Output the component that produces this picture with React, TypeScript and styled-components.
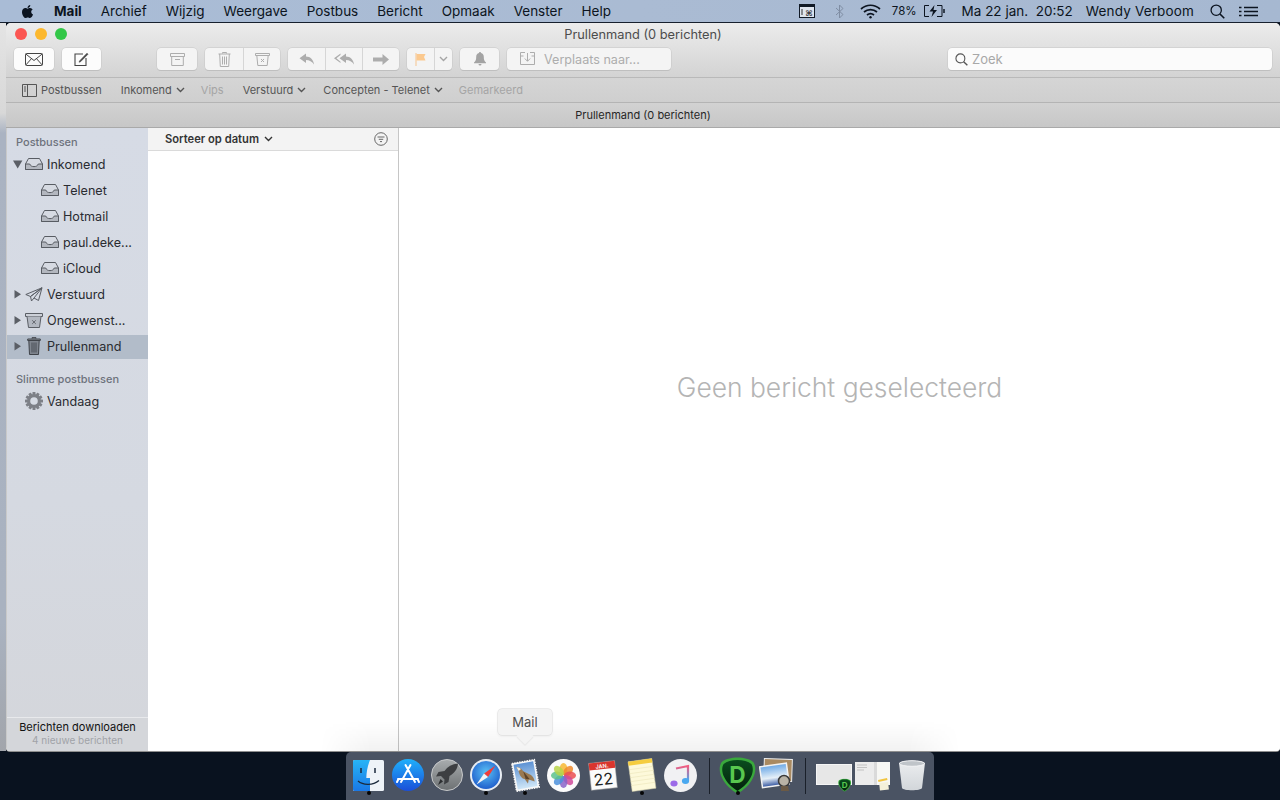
import React from "react";
import styled, { createGlobalStyle } from "styled-components";
import { FaApple } from "react-icons/fa";

const GlobalStyle = createGlobalStyle`
  html, body {
    margin: 0;
    padding: 0;
    background: #0a121e;
    font-family: Inter, "Liberation Sans", sans-serif;
  }
`;

const Desktop = styled.div`
  position: relative;
  width: 1280px;
  height: 800px;
  overflow: hidden;
  display: flex;
  flex-direction: column;
  background: #09121f;
`;

/* ---------- menu bar ---------- */

const MenuBar = styled.div`
  height: 22px;
  flex: none;
  display: flex;
  align-items: center;
  background: linear-gradient(90deg, #a9bcd6, #aabbd3 50%, #a6b8d1);
  border-bottom: 1px solid #17202e;
  font-size: 13.5px;
  color: #0c1420;
`;

const AppleLogo = styled.div`
  display: flex;
  margin-left: 20px;
  margin-right: 19px;
`;

const MenuList = styled.div`
  display: flex;
  gap: 19px;
`;

const MenuItem = styled.span<{ $bold?: boolean }>`
  font-weight: ${(p) => (p.$bold ? 700 : 400)};
`;

const StatusArea = styled.div`
  margin-left: auto;
  margin-right: 22px;
  display: flex;
  align-items: center;
`;

const StatusText = styled.span<{ $gap: number; $small?: boolean; $wide?: boolean }>`
  margin-left: ${(p) => p.$gap}px;
  font-size: ${(p) => (p.$small ? "11.5px" : "13.5px")};
  letter-spacing: ${(p) => (p.$wide ? "0.15px" : "0")};
  white-space: pre;
`;

const StatusIcon = styled.svg<{ $gap: number }>`
  margin-left: ${(p) => p.$gap}px;
  display: block;
`;

const StatusSearch = styled.div`
  margin-left: 16px;
  display: flex;
`;

/* ---------- window ---------- */

const Workspace = styled.div`
  height: 728px;
  flex: none;
  display: flex;
`;

const BehindWindow = styled.div`
  width: 6px;
  flex: none;
  background: linear-gradient(180deg, #e4e4e4 0, #d8d8d8 90px, #aab3c2 110px, #a9b2c0 600px, #a2a5ab 100%);
`;

const Window = styled.div`
  flex: 1;
  min-width: 0;
  display: flex;
  flex-direction: column;
  border-radius: 5px 5px 4px 4px;
  overflow: hidden;
  background: #fff;
  box-shadow: inset 1px 0 0 #c9c9c9, 0 1px 0 #8e8e8e;
`;

const Chrome = styled.div`
  flex: none;
  height: 55px;
  background: linear-gradient(180deg, #ececec, #d3d3d3);
  border-bottom: 1px solid #b9b9b9;
  box-sizing: border-box;
`;

const TitleRow = styled.div`
  height: 22px;
  display: grid;
  grid-template-columns: 1fr auto 1fr;
  align-items: center;
  padding: 0 9px;
`;

const Lights = styled.div`
  display: flex;
  gap: 8px;
`;

const Light = styled.span<{ $color: string }>`
  width: 12px;
  height: 12px;
  border-radius: 50%;
  background: ${(p) => p.$color};
`;

const Title = styled.div`
  font-size: 12.8px;
  color: #4c4c4c;
`;

const Toolbar = styled.div`
  height: 22px;
  margin-top: 3px;
  display: flex;
  align-items: stretch;
  gap: 8px;
  padding: 0 8px;
`;

const ToolButton = styled.div<{ $w: number; $far?: number; $dim?: boolean }>`
  width: ${(p) => p.$w}px;
  margin-left: ${(p) => p.$far ?? 0}px;
  box-sizing: border-box;
  display: flex;
  align-items: center;
  justify-content: center;
  border-radius: 4px;
  background: ${(p) => (p.$dim ? "#f4f4f4" : "#fcfcfc")};
  box-shadow: 0 0 0 0.5px #c6c6c6, 0 1px 0 #b9b9b9;
`;

const ButtonGroup = styled.div`
  display: flex;
  border-radius: 4px;
  overflow: hidden;
  background: #f4f4f4;
  box-shadow: 0 0 0 0.5px #c6c6c6, 0 1px 0 #b9b9b9;
`;

const GroupPart = styled.div<{ $w: number }>`
  width: ${(p) => p.$w}px;
  box-sizing: border-box;
  display: flex;
  align-items: center;
  justify-content: center;
  & + & {
    border-left: 1px solid #d6d6d6;
  }
`;

const MoveButton = styled(ToolButton)`
  justify-content: flex-start;
  padding-left: 13px;
  gap: 9px;
  font-size: 12.6px;
  color: #adadad;
`;

const SearchBox = styled.div`
  width: 324px;
  margin-left: auto;
  display: flex;
  align-items: center;
  gap: 4px;
  padding-left: 7px;
  box-sizing: border-box;
  background: #fbfbfb;
  border-radius: 4px;
  box-shadow: 0 0 0 0.5px #c6c6c6, 0 1px 0 #b9b9b9;
  font-size: 13px;
  color: #a8a8a8;
`;

const FavoritesBar = styled.div`
  flex: none;
  height: 25px;
  box-sizing: border-box;
  display: flex;
  align-items: center;
  padding-left: 16px;
  background: linear-gradient(180deg, #d5d5d5, #cfcfcf);
  border-bottom: 1px solid #b4b4b4;
  font-size: 11px;
  color: #555;
`;

const FavItem = styled.div<{ $gap: number; $off?: boolean }>`
  margin-left: ${(p) => p.$gap}px;
  display: flex;
  align-items: center;
  gap: 4px;
  color: ${(p) => (p.$off ? "#a5a5a5" : "#555")};
`;

const MessageBar = styled.div`
  flex: none;
  height: 25px;
  box-sizing: border-box;
  display: flex;
  align-items: center;
  justify-content: center;
  background: linear-gradient(180deg, #d2d2d2, #c7c7c7);
  border-bottom: 1px solid #a9a9a9;
  font-size: 11px;
  color: #262626;
`;

const Panes = styled.div`
  flex: 1;
  min-height: 0;
  display: flex;
`;

/* ---------- sidebar ---------- */

const Sidebar = styled.div`
  width: 141px;
  margin-left: 1px;
  flex: none;
  display: flex;
  flex-direction: column;
  padding-top: 6px;
  box-sizing: border-box;
  background: linear-gradient(180deg, #d6dbe5, #d5d9e1 60%, #d4d6db);
`;

const SideHeading = styled.div<{ $top?: number }>`
  height: 17px;
  line-height: 17px;
  margin-top: ${(p) => p.$top ?? 0}px;
  padding-left: 9px;
  font-size: 11px;
  font-weight: 500;
  color: #6d727c;
`;

const SideRow = styled.div<{ $nested?: boolean; $selected?: boolean }>`
  height: ${(p) => (p.$selected ? "24px" : "26px")};
  margin-top: ${(p) => (p.$selected ? "2px" : "0")};
  padding-bottom: ${(p) => (p.$selected ? "2px" : "0")};
  box-sizing: border-box;
  display: flex;
  align-items: center;
  padding-left: ${(p) => (p.$nested ? "34px" : "6px")};
  gap: 4px;
  font-size: 12.6px;
  color: #2a2c31;
  background: ${(p) => (p.$selected ? "#b2bcc9" : "transparent")};
`;

const Disclosure = styled.div`
  width: 12px;
  margin-right: -4px;
  display: flex;
`;

const SideIcon = styled.div`
  width: 18px;
  display: flex;
  justify-content: center;
  flex: none;
`;

const SideFooter = styled.div`
  margin-top: auto;
  height: 34px;
  box-sizing: border-box;
  padding-bottom: 3px;
  border-top: 1px solid #e8e9ec;
  display: flex;
  flex-direction: column;
  align-items: center;
  justify-content: center;
  background: #d4d6da;
  font-size: 11px;
  color: #111;
`;

const FooterNote = styled.div`
  font-size: 10px;
  color: #a1a3a8;
`;

/* ---------- message list and detail ---------- */

const MessageList = styled.div`
  width: 251px;
  flex: none;
  box-sizing: border-box;
  background: #fff;
  border-right: 1px solid #c6c6c6;
`;

const SortBar = styled.div`
  height: 23px;
  box-sizing: border-box;
  display: flex;
  align-items: center;
  padding: 0 10px 0 17px;
  background: #f3f3f3;
  border-bottom: 1px solid #dadada;
  font-size: 11.2px;
  font-weight: 600;
  color: #333;
  gap: 5px;
`;

const FilterButton = styled.svg`
  margin-left: auto;
  display: block;
`;

const Detail = styled.div`
  flex: 1;
  display: flex;
  align-items: center;
  justify-content: center;
  padding-bottom: 106px;
  background: #fff;
  font-size: 26.4px;
  font-weight: 300;
  color: #b4b4b4;
`;

/* ---------- dock ---------- */

const DockFade = styled.div`
  position: absolute;
  left: 320px;
  width: 640px;
  bottom: 49px;
  height: 30px;
  background: linear-gradient(180deg, rgba(0, 0, 0, 0), rgba(0, 0, 0, 0.05));
  -webkit-mask-image: linear-gradient(90deg, transparent, #000 8%, #000 92%, transparent);
`;

const Dock = styled.div`
  position: absolute;
  left: 346px;
  bottom: 0;
  width: 588px;
  height: 48px;
  box-sizing: border-box;
  padding: 0 3px;
  display: flex;
  background: #4a5363;
  border-radius: 5px 5px 0 0;
`;

const DockSlot = styled.div<{ $running?: boolean }>`
  position: relative;
  width: 39px;
  height: 46px;
  display: flex;
  align-items: center;
  justify-content: center;
  &::after {
    content: "";
    display: ${(p) => (p.$running ? "block" : "none")};
    position: absolute;
    left: 18px;
    bottom: 3px;
    width: 4px;
    height: 4px;
    border-radius: 50%;
    background: #050505;
  }
`;

const DockDivider = styled.div`
  width: 1px;
  height: 36px;
  margin: 6px 8.5px 0;
  background: #1a202a;
`;

const Tooltip = styled.div`
  position: absolute;
  left: 498px;
  top: 709px;
  width: 54px;
  height: 26px;
  display: flex;
  align-items: center;
  justify-content: center;
  border-radius: 4px;
  background: #f4f4f4;
  box-shadow: 0 0 0 0.5px #dcdcdc, 0 1px 3px rgba(0, 0, 0, 0.08);
  font-size: 13px;
  color: #4e4e4e;
  &::after {
    content: "";
    position: absolute;
    left: 20.5px;
    top: 20.5px;
    width: 12px;
    height: 12px;
    background: #f4f4f4;
    transform: rotate(45deg);
    box-shadow: 1px 1px 1px rgba(0, 0, 0, 0.06);
  }
`;

/* ---------- small icons ---------- */

const Chevron = ({ color = "#555", size = 9 }: { color?: string; size?: number }) => (
  <svg width={size} height={6} viewBox="0 0 9 6" fill="none">
    <path d="M1 1l3.5 3.5L8 1" stroke={color} strokeWidth="1.4" />
  </svg>
);

const Triangle = ({ open }: { open?: boolean }) => (
  <svg width="10" height="10" viewBox="0 0 10 10">
    <path d={open ? "M0 1.5h9.4L4.7 9.5z" : "M1.5 1v8.4l6.5-4.2z"} fill="#5b5f66" />
  </svg>
);

const InboxIcon = () => (
  <svg width="18" height="12" viewBox="0 0 18 12" fill="#b3b7bf" stroke="#585c63" strokeWidth="1">
    <path d="M3.5.5h11l3 5.5v5.5H.5V6z" fill="#d6dae2" />
    <path d="M.5 6h4.2c.8 2 2.4 2.6 4.3 2.6s3.500-.6 4.300-2.600h4.200v5.500H.5z" />
  </svg>
);

const SentIcon = () => (
  <svg width="18" height="15" viewBox="0 0 18 15" fill="none" stroke="#5a5e65" strokeWidth="1">
    <path d="M17 .8L.8 7.500l4.700 2zM17 .8L5.500 9.500l1 4.500 2.500-3zM17 .8L13.500 13.500 9 11" strokeLinejoin="round" />
  </svg>
);

const JunkIcon = () => (
  <svg width="18" height="15" viewBox="0 0 18 15" fill="none" stroke="#5a5e65" strokeWidth="1">
    <path d="M.5.500h17v3H.5z" fill="#ccd0d8" />
    <path d="M2 3.500l1.500 11h11l1.500-11" fill="#b3b8c1" />
    <path d="M7.200 7.300l3.600 3.600M10.800 7.300l-3.600 3.600" strokeWidth="0.9" />
  </svg>
);

const TrashBigIcon = () => (
  <svg width="14" height="18" viewBox="0 0 14 18" stroke="#3f4349" strokeWidth="1">
    <path d="M5 1.500V.7h4v.8M.7 2h12.600v1.500H.7z" fill="#8b9199" />
    <path d="M1.800 3.500l.7 14h9l.7-14z" fill="#7f858e" />
    <path d="M5 5.500v10M7 5.500v10M9 5.500v10" stroke="#494d54" />
  </svg>
);

const GearIcon = () => (
  <svg width="18" height="18" viewBox="0 0 18 18">
    <g fill="#7d8087">
      {[0, 30, 60, 90, 120, 150].map((a) => (
        <rect key={a} x="7.500" y="0" width="3" height="18" rx="0.6" transform={`rotate(${a} 9 9)`} />
      ))}
      <circle cx="9" cy="9" r="7" />
    </g>
    <circle cx="9" cy="9" r="3.800" fill="#d6dbe4" />
  </svg>
);

const tool = "#adadad";

const EnvelopeIcon = () => (
  <svg width="18" height="13" viewBox="0 0 18 13" fill="none" stroke="#444" strokeWidth="1">
    <rect x="0.500" y="0.500" width="17" height="12" rx="1" />
    <path d="M.8 1l8.200 6.500L17.200 1M.8 12l5.800-6.500M17.200 12l-5.800-6.500" />
  </svg>
);

const ComposeIcon = () => (
  <svg width="15" height="14" viewBox="0 0 15 14" fill="none" stroke="#444" strokeWidth="1.100">
    <path d="M9 2H1v11.500h11V6" />
    <path d="M5.500 9L13 1.200l1 1L6.500 9.800l-1.400.4z" fill="#444" strokeWidth="0.600" />
  </svg>
);

const ArchiveIcon = () => (
  <svg width="15" height="13" viewBox="0 0 15 13" fill="none" stroke={tool}>
    <path d="M.5.500h14v3H.5zM1.700 3.500v9h11.600v-9M5 6.500h5" />
  </svg>
);

const TrashIcon = () => (
  <svg width="13" height="15" viewBox="0 0 13 15" fill="none" stroke={tool}>
    <path d="M4.500 1.500V.5h4v1M.5 2h12M1.700 2l.6 12.500h8.400L11.300 2M4.500 4.500v8M6.500 4.500v8M8.500 4.500v8" />
  </svg>
);

const JunkToolIcon = () => (
  <svg width="15" height="13" viewBox="0 0 15 13" fill="none" stroke={tool}>
    <path d="M.5.500h14v2H.5zM1.800 2.500l1 10h9.400l1-10M6 6l3 3M9 6L6 9" />
  </svg>
);

const ReplyIcon = () => (
  <svg width="16" height="12" viewBox="0 0 16 12" fill={tool}>
    <path d="M7 .5L.5 5.300 7 10V7c3.500 0 6 1.500 8 4.500C14.500 7 11.500 3.500 7 3.500z" />
  </svg>
);

const ReplyAllIcon = () => (
  <svg width="21" height="12" viewBox="0 0 21 12" fill={tool}>
    <path d="M6.500.5L0 5.300l6.500 4.700V8.700L2.400 5.300 6.500 2z" />
    <path d="M12 .5L5.500 5.300 12 10V7c3.500 0 6 1.500 8 4.500C19.500 7 16.500 3.500 12 3.500z" />
  </svg>
);

const ForwardIcon = () => (
  <svg width="16" height="11" viewBox="0 0 16 11" fill={tool}>
    <path d="M9.500 0L16 5.500 9.500 11V7.500H0v-4h9.500z" />
  </svg>
);

const FlagIcon = () => (
  <svg width="11" height="13" viewBox="0 0 11 13">
    <path d="M.5 0h1v13h-1z" fill="#f6c48d" />
    <path d="M1.500 1H10.500L9 4 10.500 7.500H1.500z" fill="#fbc98f" />
  </svg>
);

const BellIcon = () => (
  <svg width="12" height="14" viewBox="0 0 12 14" fill="#a3a3a3">
    <path d="M6 0c.7 0 1 .5 1 1 2 .5 2.800 2 2.800 4 0 3 .6 4 2.200 5.500v.8H0v-.8C1.600 9 2.200 8 2.200 5c0-2 .8-3.500 2.800-4 0-.5.300-1 1-1z" />
    <path d="M4.500 12h3a1.500 1.500 0 0 1-3 0z" />
  </svg>
);

const MoveIcon = () => (
  <svg width="15" height="14" viewBox="0 0 15 14" fill="none" stroke={tool}>
    <path d="M5 .5H.5v12h14V.5H10M7.500 1v8M4.800 6.500l2.700 2.800 2.700-2.800" />
    <path d="M.5 4h3M11.500 4h3" />
  </svg>
);

const SearchIcon = ({ color, size }: { color: string; size: number }) => (
  <svg width={size} height={size} viewBox="0 0 14 14" fill="none" stroke={color} strokeWidth="1.200">
    <circle cx="5.800" cy="5.800" r="4.800" />
    <path d="M9.300 9.300L13.300 13.300" strokeWidth="1.500" />
  </svg>
);

/* ---------- dock icons ---------- */

const FinderIcon = () => (
  <svg width="31" height="31" viewBox="0 0 31 31">
    <defs>
      <linearGradient id="finderBlue" x1="0" y1="0" x2="0" y2="1">
        <stop offset="0" stopColor="#27b4f6" />
        <stop offset="1" stopColor="#1a78e6" />
      </linearGradient>
    </defs>
    <rect width="31" height="31" rx="1.500" fill="#eef3f8" />
    <path d="M0 1.500A1.500 1.500 0 0 1 1.500 0H17c-2.500 6-3.500 12-3.700 18H17v13H1.500A1.500 1.500 0 0 1 0 29.500z" fill="url(#finderBlue)" />
    <path d="M8 8v5M22 8v5" stroke="#1b2a3c" strokeWidth="1.500" />
    <path d="M5 21c5 4.500 15 4.500 21-.5" fill="none" stroke="#1b2a3c" strokeWidth="1.300" />
  </svg>
);

const AppStoreIcon = () => (
  <svg width="32" height="32" viewBox="0 0 32 32">
    <defs>
      <linearGradient id="storeBlue" x1="0" y1="0" x2="0" y2="1">
        <stop offset="0" stopColor="#1fb0fb" />
        <stop offset="1" stopColor="#1a4fd8" />
      </linearGradient>
    </defs>
    <circle cx="16" cy="16" r="16" fill="url(#storeBlue)" />
    <path d="M18.500 6L9 23M13.500 6L23 23M6 20h20M6.500 20l-1.500 3M25.500 20l1.500 3" fill="none" stroke="#fff" strokeWidth="2" strokeLinecap="round" />
  </svg>
);

const LaunchpadIcon = () => (
  <svg width="32" height="32" viewBox="0 0 32 32">
    <defs>
      <linearGradient id="padGrey" x1="0" y1="0" x2="0" y2="1">
        <stop offset="0" stopColor="#a8acae" />
        <stop offset="1" stopColor="#6d7173" />
      </linearGradient>
    </defs>
    <circle cx="16" cy="16" r="15.500" fill="url(#padGrey)" stroke="#c7c9cb" />
    <path d="M27 4.500c-6 .5-10.500 3-13.500 7.500l-6 1-2.500 4.500 5-.5 3.500 3.500-.5 5 4.500-2.500 1-6C23 14.500 26.500 10.500 27 4.500z" fill="#3d3f42" />
    <path d="M9.500 20l2.500 2.500-5 3.500z" fill="#2c2e30" />
  </svg>
);

const SafariIcon = () => (
  <svg width="32" height="32" viewBox="0 0 32 32">
    <defs>
      <radialGradient id="safariBlue" cx="0.500" cy="0.400" r="0.650">
        <stop offset="0" stopColor="#5ac1f5" />
        <stop offset="1" stopColor="#1b57c9" />
      </radialGradient>
    </defs>
    <circle cx="16" cy="16" r="16" fill="#e8edf3" />
    <circle cx="16" cy="16" r="14" fill="url(#safariBlue)" />
    <path d="M25.500 6.500L14 14.500 18 18z" fill="#ef3d3b" />
    <path d="M6.500 25.500L14 14.500 18 18z" fill="#f4f4f4" />
  </svg>
);

const MailStampIcon = () => (
  <svg width="32" height="35" viewBox="0 0 32 35">
    <defs>
      <linearGradient id="stampSky" x1="0" y1="0" x2="0" y2="1">
        <stop offset="0" stopColor="#5d92d4" />
        <stop offset="1" stopColor="#cfe6f7" />
      </linearGradient>
    </defs>
    <g transform="rotate(-10 16 17.500)">
      <rect x="5" y="3.500" width="23" height="28" fill="#f8f8f8" stroke="#f8f8f8" strokeWidth="1.500" strokeDasharray="1.500 1" />
      <rect x="6.500" y="5" width="20" height="25" fill="url(#stampSky)" />
      <path d="M9 8c2.500 0 4.500 2 6 5l7 5c2 2 2.500 5 2.500 7l-5.500-3-1.500 4-2.500-5c-3-1-4.500-5-4.500-9z" fill="#9a7a52" />
      <path d="M9 8c2 0 3 1 4 2.500L10.500 12z" fill="#f2eee2" />
      <path d="M15 13l5 9-4-1z" fill="#5b432b" />
    </g>
  </svg>
);

const PhotosIcon = () => {
  const petals = ["#f7b733", "#f08a2c", "#ea4f52", "#cf4a9a", "#8a63c8", "#4c90da", "#5cc28c", "#b8d34a"];
  return (
    <svg width="33" height="33" viewBox="0 0 33 33">
      <circle cx="16.500" cy="16.500" r="16.500" fill="#fbfbfb" />
      {petals.map((c, i) => (
        <ellipse key={c} cx="16.500" cy="10" rx="3.900" ry="6" fill={c} opacity="0.850" transform={`rotate(${i * 45} 16.500 16.500)`} />
      ))}
    </svg>
  );
};

const CalendarIcon = () => (
  <svg width="32" height="33" viewBox="0 0 32 33">
    <g transform="rotate(-6 16 16.500)">
      <rect x="3" y="3" width="26" height="27" fill="#fbfbfb" stroke="#a9a9a9" strokeWidth="0.500" />
      <path d="M3 3h26v7H3z" fill="#d9352e" />
      <text x="16" y="9" textAnchor="middle" fontSize="5.500" fontFamily="Inter, sans-serif" fontWeight="600" fill="#fff">JAN.</text>
      <text x="16" y="26" textAnchor="middle" fontSize="16" fontFamily="Inter, sans-serif" fill="#222">22</text>
    </g>
  </svg>
);

const NotesIcon = () => (
  <svg width="32" height="36" viewBox="0 0 32 36">
    <g transform="rotate(-8 16 18)">
      <rect x="4" y="3" width="24" height="30" fill="#fdf9da" stroke="#c9c5a5" strokeWidth="0.500" />
      <path d="M4 3h24v4H4z" fill="#f5cd3f" />
      {[11, 15, 19, 23, 27].map((y) => (
        <path key={y} d={`M4 ${y}h24`} stroke="#ece6bb" strokeWidth="0.600" />
      ))}
    </g>
  </svg>
);

const MusicIcon = () => (
  <svg width="33" height="33" viewBox="0 0 33 33">
    <defs>
      <linearGradient id="noteColors" x1="0" y1="1" x2="1" y2="0">
        <stop offset="0" stopColor="#9c6ae8" />
        <stop offset="0.500" stopColor="#ef5a92" />
        <stop offset="1" stopColor="#f8555f" />
      </linearGradient>
      <linearGradient id="noteRight" x1="0" y1="0" x2="0" y2="1">
        <stop offset="0" stopColor="#f45b7e" />
        <stop offset="1" stopColor="#4aa8f0" />
      </linearGradient>
    </defs>
    <circle cx="16.500" cy="16.500" r="16.500" fill="#f1f1f3" />
    <path d="M12 9.500L24 7v15" fill="none" stroke="url(#noteRight)" strokeWidth="2.200" />
    <path d="M12.500 9.500V24" fill="none" stroke="url(#noteColors)" strokeWidth="2.200" />
    <ellipse cx="10" cy="24.500" rx="3.600" ry="3" fill="#9c6ae8" />
    <ellipse cx="21.500" cy="22" rx="3.600" ry="3" fill="#4aa8f0" />
  </svg>
);

const ShieldIcon = ({ size, id }: { size: number; id: string }) => (
  <svg width={size} height={size} viewBox="0 0 36 36">
    <defs>
      <linearGradient id={id} x1="0" y1="0" x2="0" y2="1">
        <stop offset="0" stopColor="#0a4d1e" />
        <stop offset="1" stopColor="#03200c" />
      </linearGradient>
    </defs>
    <path d="M18 .5C24 .5 30 2 33.500 5 36 8.500 36 15 33 20.500 30 27 24 32 18 36 12 32 6 27 3 20.500 0 15 0 8.500 2.500 5 6 2 12 .5 18 .5z" fill="#3aa83c" />
    <path d="M18 3c5.500 0 10.500 1.300 13.500 3.800C33.500 10 33.300 15 31 19.500 28.500 25 23.500 29.500 18 33 12.500 29.500 7.500 25 5 19.500 2.700 15 2.500 10 4.500 6.800 7.500 4.300 12.500 3 18 3z" fill={`url(#${id})`} />
    <text x="18" y="25" textAnchor="middle" fontSize="22" fontWeight="700" fontFamily="Inter, sans-serif" fill="#58c84f">D</text>
  </svg>
);

const PreviewIcon = () => (
  <svg width="35" height="34" viewBox="0 0 35 34">
    <defs>
      <linearGradient id="previewSky" x1="0" y1="0" x2="0" y2="1">
        <stop offset="0" stopColor="#6aa7e6" />
        <stop offset="0.600" stopColor="#e6f0f8" />
        <stop offset="1" stopColor="#2d4f9c" />
      </linearGradient>
    </defs>
    <rect x="5" y="1" width="28" height="22" fill="#a98a62" stroke="#eee" strokeWidth="1" transform="rotate(2 19 12)" />
    <g transform="rotate(-8 15 18)">
      <rect x="2" y="7" width="27" height="21" fill="url(#previewSky)" stroke="#f2f2f2" strokeWidth="1.500" />
    </g>
    <circle cx="25" cy="23" r="5.500" fill="#b9b3a6" stroke="#3a3a3a" strokeWidth="1.500" />
    <path d="M22 28h7l1 5h-8z" fill="#6b5a45" />
  </svg>
);

const DocStackIcon = () => (
  <svg width="36" height="34" viewBox="0 0 36 34">
    <rect x="0.500" y="6.500" width="35" height="20" fill="#e7e7e7" stroke="#f5f5f5" strokeWidth="1" />
    <g transform="translate(22 20.500) scale(0.370)">
      <ShieldIcon size={36} id="shieldSmall" />
    </g>
  </svg>
);

const DocThumbIcon = () => (
  <svg width="36" height="34" viewBox="0 0 36 34">
    <rect x="0" y="4" width="35" height="23" fill="#f7f7f4" />
    <rect x="0" y="4" width="19" height="23" fill="#ececec" />
    <rect x="19" y="4" width="3" height="23" fill="#dadada" />
    <path d="M2 7h10M2 9.500h10M2 12h7" stroke="#b9b9b9" strokeWidth="0.800" />
    <path d="M23 22l9-2 .5 2-9 2z" fill="#f2c53f" />
    <path d="M24.500 24.500h9v7.500h-9z" fill="#f4f0da" transform="rotate(-6 29 28)" />
  </svg>
);

const BinIcon = () => (
  <svg width="28" height="33" viewBox="0 0 28 33">
    <defs>
      <linearGradient id="binGlass" x1="0" y1="0" x2="0" y2="1">
        <stop offset="0" stopColor="#eceef0" />
        <stop offset="1" stopColor="#d2d6da" />
      </linearGradient>
    </defs>
    <path d="M1 4c4-3 22-3 26 0l-3 25c-1 3-19 3-20 0z" fill="url(#binGlass)" />
    <ellipse cx="14" cy="4.500" rx="12.500" ry="2.800" fill="#bfc4c9" stroke="#f2f3f5" />
  </svg>
);

const inboxes = ["Telenet", "Hotmail", "paul.deke...", "iCloud"];

const menus = ["Archief", "Wijzig", "Weergave", "Postbus", "Bericht", "Opmaak", "Venster", "Help"];

export default function App() {
  return (
    <Desktop>
      <GlobalStyle />
      <MenuBar>
        <AppleLogo>
          <FaApple size={15} color="#0c1420" />
        </AppleLogo>
        <MenuList>
          <MenuItem $bold>Mail</MenuItem>
          {menus.map((m) => (
            <MenuItem key={m}>{m}</MenuItem>
          ))}
        </MenuList>
        <StatusArea>
          <StatusIcon $gap={0} width="16" height="14" viewBox="0 0 16 14">
            <rect x="0.500" y="0.500" width="15" height="13" fill="#dfe5ee" stroke="#111a26" />
            <path d="M0 0h16v3H0z" fill="#111a26" />
            <path d="M2 6h2M2 8h2M2 10h2" stroke="#333" />
            <text x="10" y="11.500" textAnchor="middle" fontSize="8" fontFamily="DejaVu Sans, sans-serif" fill="#111">⌘</text>
          </StatusIcon>
          <StatusIcon $gap={20} width="9" height="15" viewBox="0 0 9 15" fill="none" stroke="#7f8da3">
            <path d="M1 4l7 6.500-3.500 3.500V1L8 4.500 1 11" />
          </StatusIcon>
          <StatusIcon $gap={16} width="21" height="15" viewBox="0 0 21 15" fill="none" stroke="#0c1420" strokeWidth="1.700">
            <path d="M1 5c5.500-5 13.500-5 19 0M4 8c3.700-3.300 9.300-3.300 13 0M7 11c2-1.700 5-1.700 7 0" />
            <circle cx="10.500" cy="13.300" r="1.200" fill="#0c1420" stroke="none" />
          </StatusIcon>
          <StatusText $gap={11} $small>78%</StatusText>
          <StatusIcon $gap={6} width="23" height="12" viewBox="0 0 23 12" fill="none" stroke="#0c1420">
            <path d="M6 .5H1.500v11H6M14 .5h5v11h-5" />
            <path d="M21 4v4" strokeWidth="1.500" />
            <path d="M11.500 0L6.500 6.500h3.500L8.500 12l5.500-7h-3.500z" fill="#0c1420" stroke="none" />
          </StatusIcon>
          <StatusText $gap={16}>Ma 22 jan.  20:52</StatusText>
          <StatusText $gap={13} $wide>Wendy Verboom</StatusText>
          <StatusSearch>
            <SearchIcon color="#0c1420" size={15} />
          </StatusSearch>
          <StatusIcon $gap={14} width="19" height="11" viewBox="0 0 19 11" stroke="#0c1420" strokeWidth="1.600">
            <path d="M0 1.500h2.500M0 5.500h2.500M0 9.500h2.500M5 1.500h14M5 5.500h14M5 9.500h14" />
          </StatusIcon>
        </StatusArea>
      </MenuBar>

      <Workspace>
        <BehindWindow />
        <Window>
          <Chrome>
            <TitleRow>
              <Lights>
                <Light $color="#fb5652" />
                <Light $color="#fcb82e" />
                <Light $color="#33c748" />
              </Lights>
              <Title>Prullenmand (0 berichten)</Title>
            </TitleRow>
            <Toolbar>
              <ToolButton $w={40}><EnvelopeIcon /></ToolButton>
              <ToolButton $w={39}><ComposeIcon /></ToolButton>
              <ToolButton $w={40} $far={48} $dim><ArchiveIcon /></ToolButton>
              <ButtonGroup>
                <GroupPart $w={38}><TrashIcon /></GroupPart>
                <GroupPart $w={37}><JunkToolIcon /></GroupPart>
              </ButtonGroup>
              <ButtonGroup>
                <GroupPart $w={37}><ReplyIcon /></GroupPart>
                <GroupPart $w={37}><ReplyAllIcon /></GroupPart>
                <GroupPart $w={37}><ForwardIcon /></GroupPart>
              </ButtonGroup>
              <ButtonGroup>
                <GroupPart $w={27}><FlagIcon /></GroupPart>
                <GroupPart $w={18}><Chevron color="#a5a5a5" /></GroupPart>
              </ButtonGroup>
              <ToolButton $w={39} $dim><BellIcon /></ToolButton>
              <MoveButton $w={164} $dim><MoveIcon />Verplaats naar...</MoveButton>
              <SearchBox>
                <SearchIcon color="#555" size={13} />
                Zoek
              </SearchBox>
            </Toolbar>
          </Chrome>

          <FavoritesBar>
            <FavItem $gap={0}>
              <svg width="15" height="13" viewBox="0 0 15 13" fill="none" stroke="#555">
                <path d="M.5.500h14v12H.5zM5.500.500v12M2 3h2M2 5h2M2 7h2" />
              </svg>
              Postbussen
            </FavItem>
            <FavItem $gap={19}>Inkomend <Chevron /></FavItem>
            <FavItem $gap={16} $off>Vips</FavItem>
            <FavItem $gap={19}>Verstuurd <Chevron /></FavItem>
            <FavItem $gap={17}>Concepten - Telenet <Chevron /></FavItem>
            <FavItem $gap={16} $off>Gemarkeerd</FavItem>
          </FavoritesBar>

          <MessageBar>Prullenmand (0 berichten)</MessageBar>

          <Panes>
            <Sidebar>
              <SideHeading>Postbussen</SideHeading>
              <SideRow>
                <Disclosure><Triangle open /></Disclosure>
                <SideIcon><InboxIcon /></SideIcon>
                Inkomend
              </SideRow>
              {inboxes.map((name) => (
                <SideRow key={name} $nested>
                  <SideIcon><InboxIcon /></SideIcon>
                  {name}
                </SideRow>
              ))}
              <SideRow>
                <Disclosure><Triangle /></Disclosure>
                <SideIcon><SentIcon /></SideIcon>
                Verstuurd
              </SideRow>
              <SideRow>
                <Disclosure><Triangle /></Disclosure>
                <SideIcon><JunkIcon /></SideIcon>
                Ongewenst...
              </SideRow>
              <SideRow $selected>
                <Disclosure><Triangle /></Disclosure>
                <SideIcon><TrashBigIcon /></SideIcon>
                Prullenmand
              </SideRow>
              <SideHeading $top={12}>Slimme postbussen</SideHeading>
              <SideRow>
                <Disclosure />
                <SideIcon><GearIcon /></SideIcon>
                Vandaag
              </SideRow>
              <SideFooter>
                Berichten downloaden
                <FooterNote>4 nieuwe berichten</FooterNote>
              </SideFooter>
            </Sidebar>

            <MessageList>
              <SortBar>
                Sorteer op datum
                <Chevron color="#333" />
                <FilterButton width="14" height="14" viewBox="0 0 14 14" fill="none" stroke="#666">
                  <circle cx="7" cy="7" r="6.300" />
                  <path d="M3.500 5h7M4.800 7.300h4.400M6 9.600h2" />
                </FilterButton>
              </SortBar>
            </MessageList>

            <Detail>Geen bericht geselecteerd</Detail>
          </Panes>
        </Window>
      </Workspace>

      <DockFade />
      <Dock>
        <DockSlot $running><FinderIcon /></DockSlot>
        <DockSlot><AppStoreIcon /></DockSlot>
        <DockSlot><LaunchpadIcon /></DockSlot>
        <DockSlot $running><SafariIcon /></DockSlot>
        <DockSlot $running><MailStampIcon /></DockSlot>
        <DockSlot><PhotosIcon /></DockSlot>
        <DockSlot><CalendarIcon /></DockSlot>
        <DockSlot $running><NotesIcon /></DockSlot>
        <DockSlot><MusicIcon /></DockSlot>
        <DockDivider />
        <DockSlot $running><ShieldIcon size={37} id="shieldMain" /></DockSlot>
        <DockSlot><PreviewIcon /></DockSlot>
        <DockDivider />
        <DockSlot><DocStackIcon /></DockSlot>
        <DockSlot><DocThumbIcon /></DockSlot>
        <DockSlot><BinIcon /></DockSlot>
      </Dock>
      <Tooltip>Mail</Tooltip>
    </Desktop>
  );
}
